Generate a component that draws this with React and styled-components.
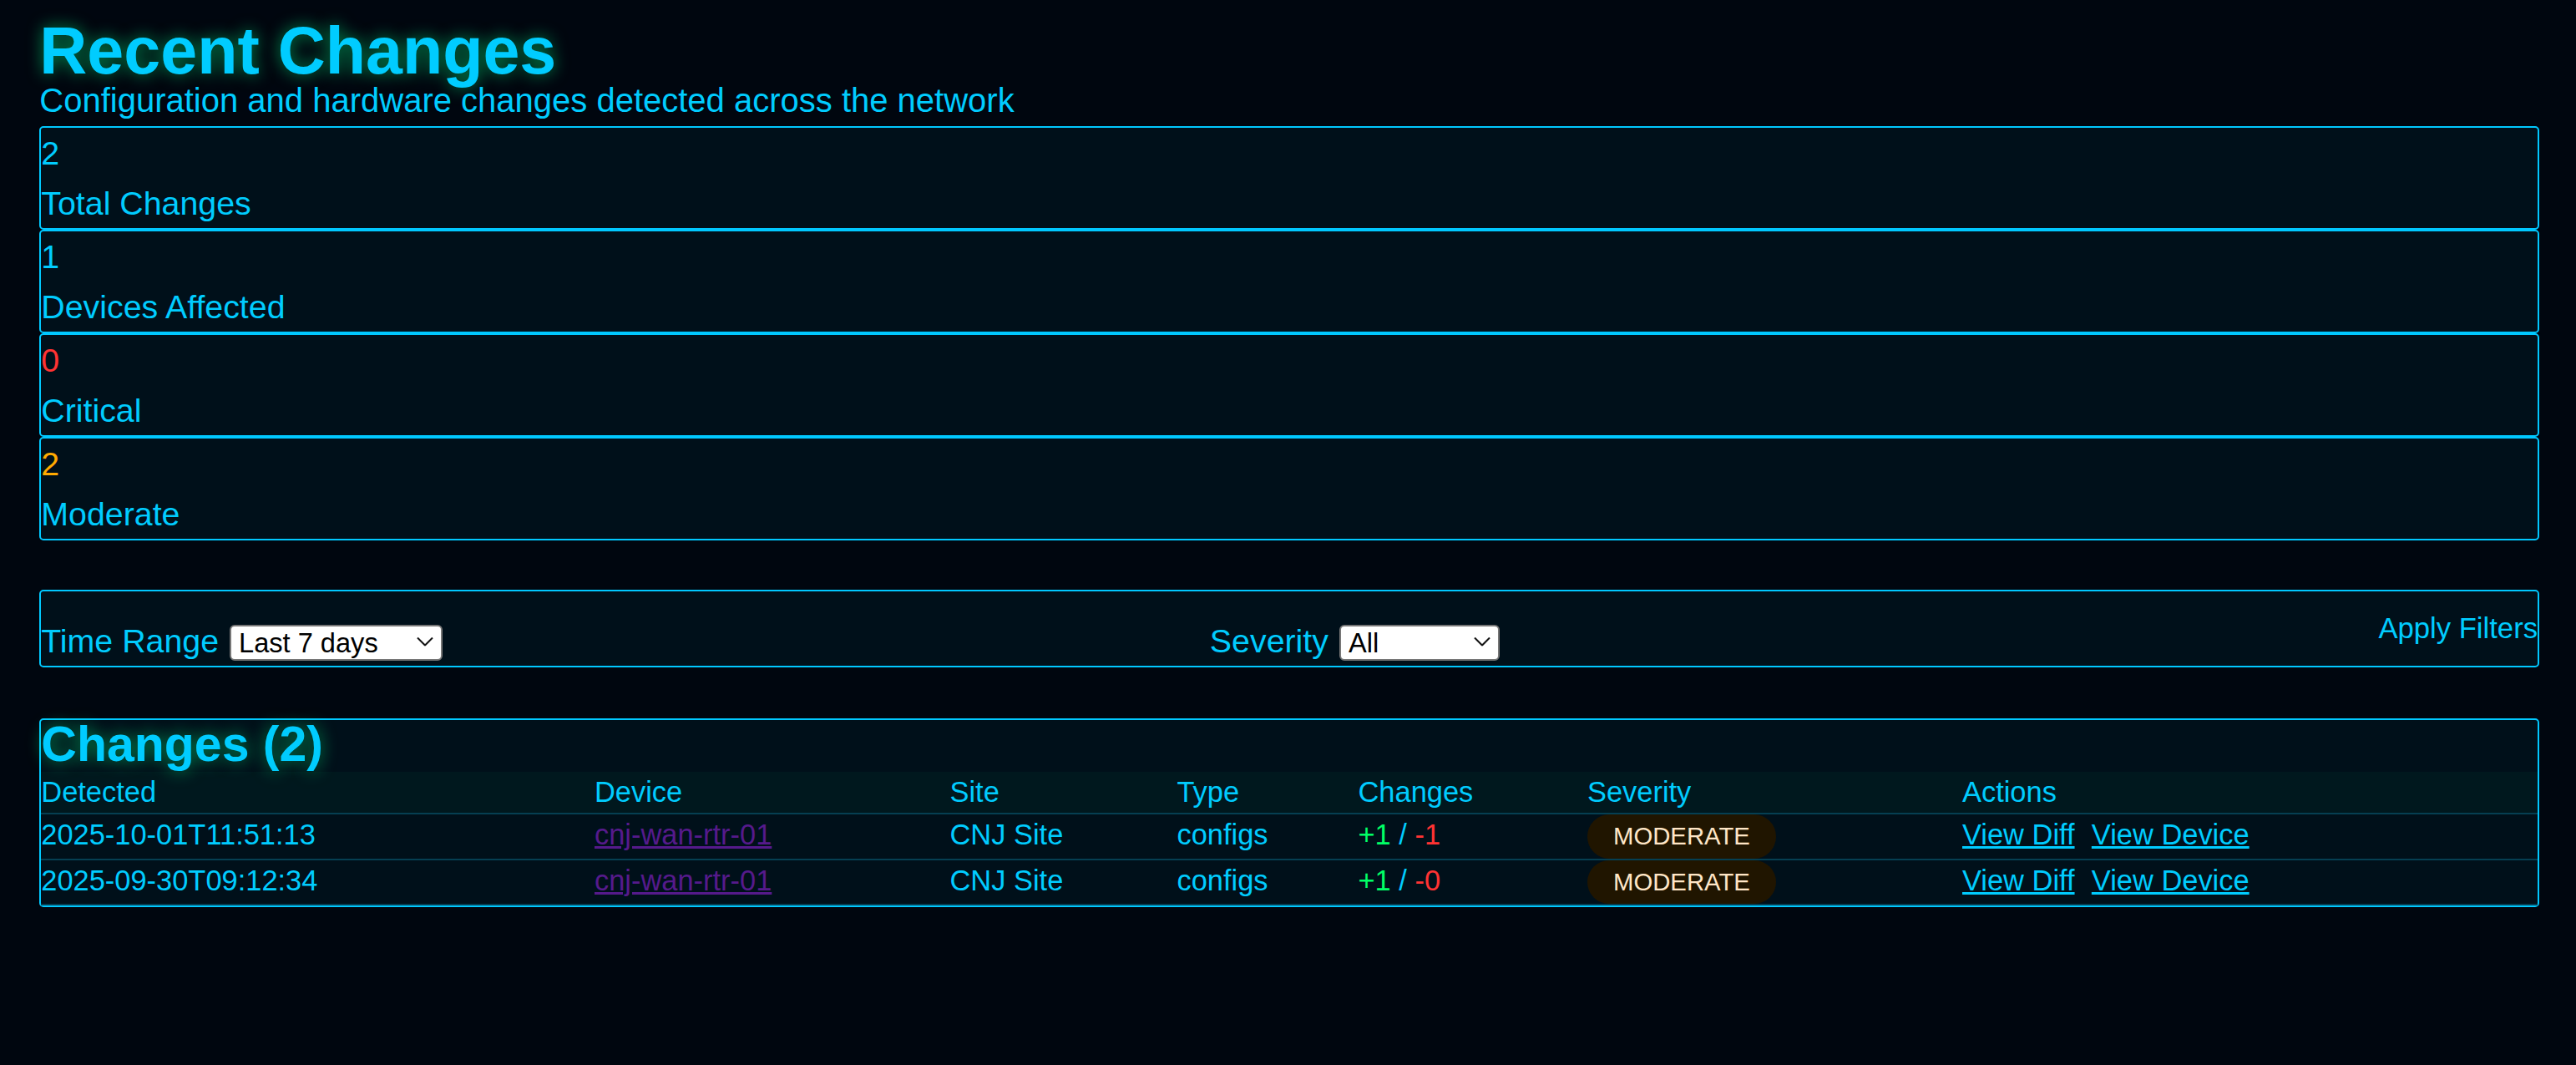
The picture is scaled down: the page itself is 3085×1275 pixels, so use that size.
import React from 'react';
import styled, { createGlobalStyle } from 'styled-components';

const CYAN = '#00ccff';
const BORDER = '#00c8ff';
const PANEL = '#00101a';
const DIVIDER = '#053f52';
const GLOW = '0 0 19px rgba(0, 255, 136, 0.55)';

const GlobalStyle = createGlobalStyle`
  html, body {
    margin: 0;
    padding: 0;
    background: #00060f;
  }
  body {
    font-family: "Liberation Sans", Arial, sans-serif;
    color: ${CYAN};
  }
  *, *::before, *::after { box-sizing: border-box; }
`;

const Page = styled.div`
  min-height: 1275px;
  padding: 21.7px 44px 40px 47.3px;
  display: flex;
  flex-direction: column;
`;

const Title = styled.h1`
  margin: 0;
  font-size: 79px;
  line-height: 78.7px;
  font-weight: 700;
  color: ${CYAN};
  text-shadow: ${GLOW};
`;

const Subtitle = styled.p`
  margin: 0.6px 0 10.3px;
  font-size: 40px;
  line-height: 39.35px;
`;

const StatList = styled.div`
  display: flex;
  flex-direction: column;
`;

const StatCard = styled.div`
  border: 2px solid ${BORDER};
  border-radius: 5px;
  background: ${PANEL};
`;

const StatValue = styled.div`
  font-size: 39.35px;
  line-height: 60px;
  color: ${p => p.$color || CYAN};
`;

const StatLabel = styled.div`
  font-size: 39.35px;
  line-height: 60px;
`;

const FilterBar = styled.div`
  margin-top: 59px;
  height: 93.6px;
  padding-bottom: 5.9px;
  display: flex;
  align-items: flex-end;
  border: 2px solid ${BORDER};
  border-radius: 5px;
  background: ${PANEL};
`;

const FilterGroup = styled.label`
  flex: 1;
  display: flex;
  align-items: baseline;
  gap: 13px;
  font-size: 39.35px;
  line-height: normal;
`;

const SelectWrap = styled.span`
  position: relative;
  display: inline-block;
`;

const Select = styled.select`
  appearance: none;
  -webkit-appearance: none;
  width: ${p => p.$w}px;
  height: 43px;
  border: 2px solid #767676;
  border-radius: 6px;
  background: #ffffff;
  color: #000000;
  font-family: "Liberation Sans", Arial, sans-serif;
  font-size: 32.6px;
  padding: 0 9px;
  margin: 0;
`;

const Chevron = styled.svg`
  position: absolute;
  right: 11px;
  top: 50%;
  transform: translateY(-50%);
  pointer-events: none;
`;

const ApplyButton = styled.button`
  align-self: center;
  margin: 5.9px 0 0;
  background: none;
  border: 0;
  padding: 0;
  color: ${CYAN};
  font-family: "Liberation Sans", Arial, sans-serif;
  font-size: 34.65px;
  line-height: normal;
  cursor: pointer;
`;

const ChangesPanel = styled.section`
  margin-top: 60.7px;
  border: 2px solid ${BORDER};
  border-radius: 5px;
  background: ${PANEL};
`;

const PanelTitle = styled.h2`
  margin: 0 0 3.5px;
  font-size: 59px;
  line-height: 58.5px;
  font-weight: 700;
  color: ${CYAN};
  text-shadow: ${GLOW};
`;

const Table = styled.table`
  width: 100%;
  table-layout: fixed;
  border-collapse: separate;
  border-spacing: 0;
  font-size: 34.43px;
  line-height: 49.3px;
`;

const Col = styled.col`
  width: ${p => p.$w}px;
`;

const Th = styled.th`
  text-align: left;
  font-weight: 400;
  padding: 0;
  background: #00181e;
  border-bottom: 2px solid ${DIVIDER};
  white-space: nowrap;
`;

const Td = styled.td`
  padding: 0;
  border-bottom: 2px solid ${DIVIDER};
  white-space: nowrap;
  vertical-align: baseline;
`;

const DeviceLink = styled.a`
  color: #551a8b;
  text-decoration: underline;
`;

const Plus = styled.span`
  color: #00ff66;
`;

const Minus = styled.span`
  color: #ff3333;
`;

const Badge = styled.span`
  display: inline-block;
  padding: 9.85px 31px;
  font-size: 29.3px;
  line-height: 32.6px;
  border-radius: 999px;
  background: #201500;
  color: #ffe6c7;
`;

const ActionLink = styled.a`
  color: ${CYAN};
  text-decoration: underline;
  margin-right: 20.3px;
`;

const stats = [
  { value: 2, label: 'Total Changes' },
  { value: 1, label: 'Devices Affected' },
  { value: 0, label: 'Critical', color: '#ff3333' },
  { value: 2, label: 'Moderate', color: '#ffaa00' },
];

const columns = [
  { name: 'Detected', w: 662.7 },
  { name: 'Device', w: 425.5 },
  { name: 'Site', w: 272 },
  { name: 'Type', w: 217 },
  { name: 'Changes', w: 274.5 },
  { name: 'Severity', w: 449 },
  { name: 'Actions', w: 689 },
];

const rows = [
  { detected: '2025-10-01T11:51:13', device: 'cnj-wan-rtr-01', site: 'CNJ Site', type: 'configs', added: 1, removed: 1, severity: 'MODERATE' },
  { detected: '2025-09-30T09:12:34', device: 'cnj-wan-rtr-01', site: 'CNJ Site', type: 'configs', added: 1, removed: 0, severity: 'MODERATE' },
];

function Dropdown({ width, value, options }) {
  return (
    <SelectWrap>
      <Select $w={width} defaultValue={value}>
        {options.map(o => (
          <option key={o}>{o}</option>
        ))}
      </Select>
      <Chevron width="20" height="11" viewBox="0 0 20 11">
        <path d="M1 1 L10 10 L19 1" fill="none" stroke="#111" strokeWidth="2" />
      </Chevron>
    </SelectWrap>
  );
}

export default function App() {
  return (
    <>
      <GlobalStyle />
      <Page>
        <Title>Recent Changes</Title>
        <Subtitle>Configuration and hardware changes detected across the network</Subtitle>

        <StatList>
          {stats.map(s => (
            <StatCard key={s.label}>
              <StatValue $color={s.color}>{s.value}</StatValue>
              <StatLabel>{s.label}</StatLabel>
            </StatCard>
          ))}
        </StatList>

        <FilterBar>
          <FilterGroup>
            Time Range
            <Dropdown width={255} value="Last 7 days" options={['Last 24 hours', 'Last 7 days', 'Last 30 days']} />
          </FilterGroup>
          <FilterGroup>
            Severity
            <Dropdown width={192} value="All" options={['All', 'Critical', 'Moderate', 'Minor']} />
          </FilterGroup>
          <ApplyButton type="button">Apply Filters</ApplyButton>
        </FilterBar>

        <ChangesPanel>
          <PanelTitle>Changes ({rows.length})</PanelTitle>
          <Table>
            <colgroup>
              {columns.map(c => (
                <Col key={c.name} $w={c.w} />
              ))}
            </colgroup>
            <thead>
              <tr>
                {columns.map(c => (
                  <Th key={c.name}>{c.name}</Th>
                ))}
              </tr>
            </thead>
            <tbody>
              {rows.map(r => (
                <tr key={r.detected}>
                  <Td>{r.detected}</Td>
                  <Td>
                    <DeviceLink href="#">{r.device}</DeviceLink>
                  </Td>
                  <Td>{r.site}</Td>
                  <Td>{r.type}</Td>
                  <Td>
                    <Plus>+{r.added}</Plus> / <Minus>-{r.removed}</Minus>
                  </Td>
                  <Td>
                    <Badge>{r.severity}</Badge>
                  </Td>
                  <Td>
                    <ActionLink href="#">View Diff</ActionLink>
                    <ActionLink href="#">View Device</ActionLink>
                  </Td>
                </tr>
              ))}
            </tbody>
          </Table>
        </ChangesPanel>
      </Page>
    </>
  );
}
